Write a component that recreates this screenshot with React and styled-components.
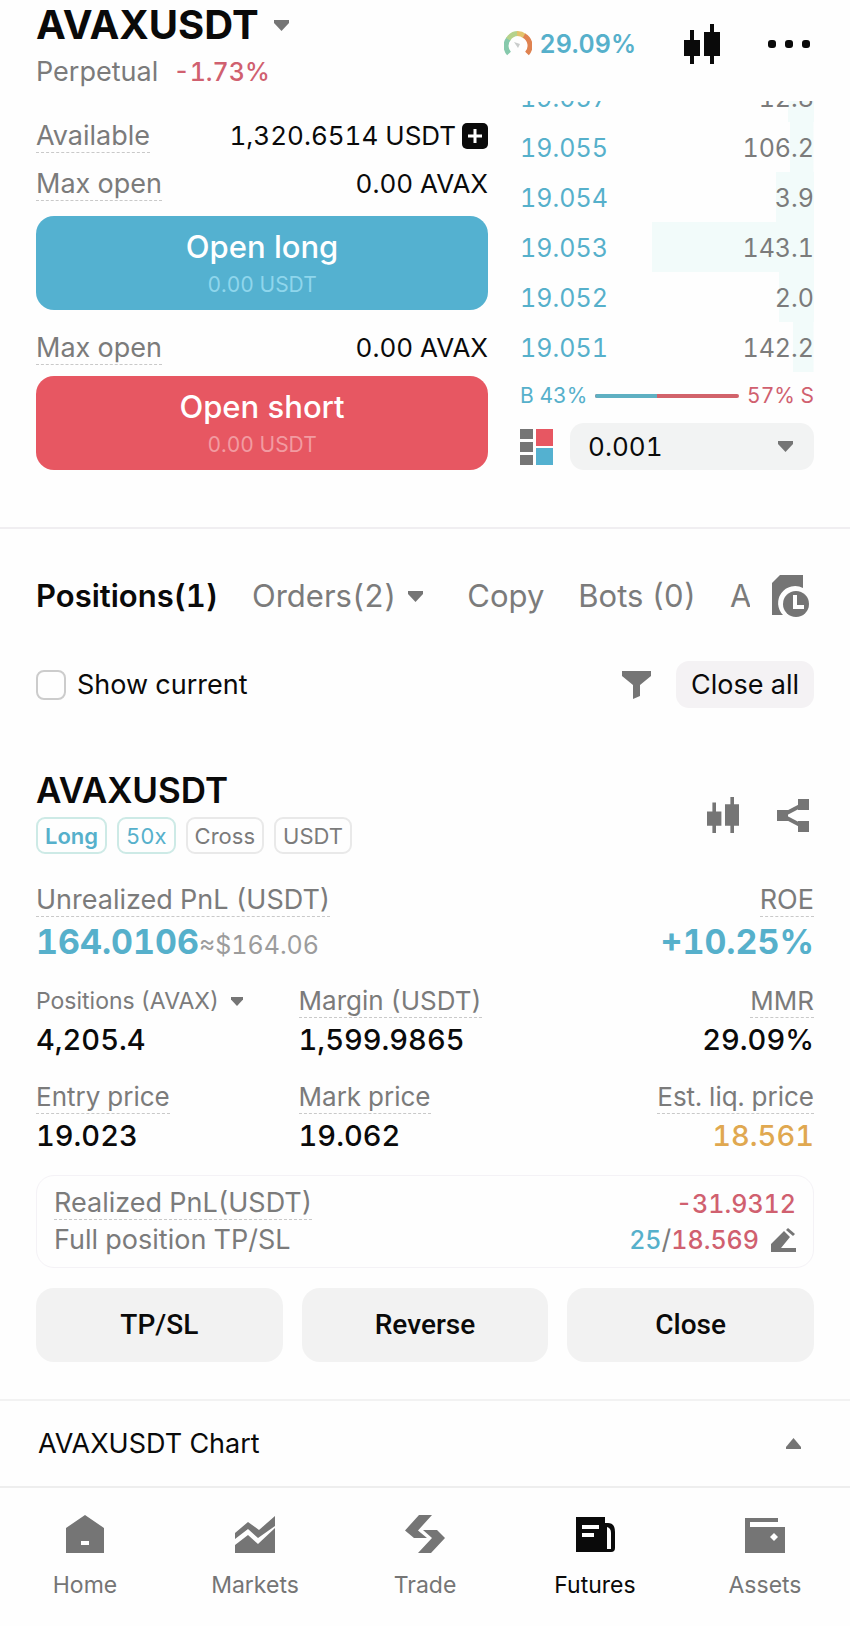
import { useState } from "react";
import styled, { createGlobalStyle } from "styled-components";

const bids = [
	{ price: "19.057", amount: "12.8", depth: 9 },
	{ price: "19.055", amount: "106.2", depth: 8 },
	{ price: "19.054", amount: "3.9", depth: 13 },
	{ price: "19.053", amount: "143.1", depth: 55 },
	{ price: "19.052", amount: "2.0", depth: 12 },
	{ price: "19.051", amount: "142.2", depth: 7 },
];

const stats = [
	{ label: "Positions (AVAX)", value: "4,205.4", menu: true },
	{ label: "Margin (USDT)", value: "1,599.9865" },
	{ label: "MMR", value: "29.09%" },
	{ label: "Entry price", value: "19.023" },
	{ label: "Mark price", value: "19.062" },
	{ label: "Est. liq. price", value: "18.561", warn: true },
];

const Caret = ({ up, small }) => (
	<svg width={small ? 12 : 15} height={small ? 9 : 11} viewBox="0 0 15 11" aria-hidden="true">
		<path d={up ? "M0 11V9L7.5 0 15 9v2z" : "M0 0h15v3L7.5 11 0 3z"} fill="#757575" />
	</svg>
);

const Candles = ({ size = 40, color = "#0a0a0a" }) => (
	<svg width={(size * 36) / 40} height={size} viewBox="0 0 36 40" fill={color} aria-hidden="true">
		<path d="M6 6h4v10h6v16h-6v8H6v-8H0V16h6z" />
		<path d="M26 0h4v8h6v24h-6v8h-4v-8h-6V8h6z" />
	</svg>
);

const Gauge = () => (
	<svg width="28" height="25" viewBox="0 0 28 25" fill="none" strokeWidth="5" aria-hidden="true">
		<path d="M5 22.5A11.5 11.5 0 0 1 4.5 7.7" stroke="#86c9ac" />
		<path d="M4.2 8.2A11.5 11.5 0 0 1 14 2.5" stroke="#b5d28b" />
		<path d="M13 2.5A11.5 11.5 0 0 1 20.5 5" stroke="#e3c36c" />
		<path d="M20 4.6A11.5 11.5 0 0 1 23 22.5" stroke="#df8250" />
		<path d="M10 11l6 2-2 4z" fill="#c9cccb" />
	</svg>
);

const navItems = [
	{
		label: "Home",
		icon: <path fillRule="evenodd" d="M20 0L39 13v25H1V13zM16 26v4h8v-4z" />,
	},
	{
		label: "Markets",
		icon: (
			<>
				<path d="M0 18L13 7l11 8L40 1v10L23 23 13 14 0 24z" />
				<path d="M0 30l13-10 10 9 17-16v25H0z" />
			</>
		),
	},
	{
		label: "Trade",
		icon: (
			<>
				<path d="M14 0h13L13 15.500 22 23H9L0 15.500z" />
				<path d="M18 15h14l8 8-14 15H13l14-15z" />
			</>
		),
	},
	{
		label: "Futures",
		active: true,
		icon: (
			<path
				fillRule="evenodd"
				d="M1 2h29v6h3q7 0 7 9v16q0 4-4 4H1zM7 10v4h17v-4zM7 18v4h12v-4zM32 12v22h4V18q0-5-4-6z"
			/>
		),
	},
	{
		label: "Assets",
		icon: <path fillRule="evenodd" d="M0 3h33v4H5v5h35v26H0zM29 18l-4 4 4 4 4-4z" />,
	},
];

const App = () => {
	const [step, setStep] = useState("0.001");
	const [onlyCurrent, setOnlyCurrent] = useState(false);

	return (
		<>
			<GlobalStyle />
			<Header>
				<div>
					<PairTitle>
						AVAXUSDT <Caret />
					</PairTitle>
					<PairInfo>
						Perpetual <Change>-1.73%</Change>
					</PairInfo>
				</div>
				<HeaderActions>
					<Risk>
						<Gauge />
						29.09%
					</Risk>
					<IconButton aria-label="Chart">
						<Candles />
					</IconButton>
					<IconButton aria-label="More">
						<svg width="42" height="8" viewBox="0 0 42 8" fill="#0a0a0a">
							<rect width="8" height="8" rx="3" />
							<rect x="17" width="8" height="8" rx="3" />
							<rect x="34" width="8" height="8" rx="3" />
						</svg>
					</IconButton>
				</HeaderActions>
			</Header>

			<TradePanel>
				<div>
					<Balances>
						<Row>
							<Hint>Available</Hint>
							<Amount>
								1,320.6514 USDT
								<IconButton aria-label="Add funds">
									<svg width="26" height="26" viewBox="0 0 26 26">
										<rect width="26" height="26" rx="5" fill="#0a0a0a" />
										<path d="M13 6v14M6 13h14" stroke="#fff" strokeWidth="3" />
									</svg>
								</IconButton>
							</Amount>
						</Row>
						<Row>
							<Hint>Max open</Hint>
							<Amount>0.00 AVAX</Amount>
						</Row>
					</Balances>
					<OrderButton>
						Open long
						<small>0.00 USDT</small>
					</OrderButton>
					<ShortSide>
						<Row>
							<Hint>Max open</Hint>
							<Amount>0.00 AVAX</Amount>
						</Row>
					</ShortSide>
					<OrderButton $short>
						Open short
						<small>0.00 USDT</small>
					</OrderButton>
				</div>

				<div>
					<BookWindow>
						<Book aria-label="Bids">
							<tbody>
								{bids.map(bid => (
									<BookRow key={bid.price} style={{ backgroundSize: `${bid.depth}% 100%` }}>
										<td>{bid.price}</td>
										<td>{bid.amount}</td>
									</BookRow>
								))}
							</tbody>
						</Book>
					</BookWindow>
					<Ratio>
						<span>B 43%</span>
						<RatioTrack>
							<RatioFill style={{ width: "43%" }} />
						</RatioTrack>
						<Sell>57% S</Sell>
					</Ratio>
					<BookTools>
						<IconButton aria-label="Order book layout">
							<svg width="33" height="36" viewBox="0 0 33 36">
								<path d="M0 0h13v10H0zM0 13h13v10H0zM0 26h13v10H0z" fill="#757575" />
								<path d="M16 0h17v17H16z" fill="#e75762" />
								<path d="M16 19h17v17H16z" fill="#54b1d0" />
							</svg>
						</IconButton>
						<StepBox>
							<select
								aria-label="Price step"
								value={step}
								onChange={e => setStep(e.target.value)}
							>
								<option>0.001</option>
								<option>0.01</option>
								<option>0.1</option>
							</select>
							<Caret />
						</StepBox>
					</BookTools>
				</div>
			</TradePanel>

			<Positions>
				<TabBar>
					<Tabs>
						<Tab $active>Positions(1)</Tab>
						<Tab $menu>
							Orders(2) <Caret />
						</Tab>
						<Tab>Copy</Tab>
						<Tab>Bots (0)</Tab>
						<Tab>A</Tab>
					</Tabs>
					<IconButton aria-label="History">
						<svg width="38" height="43" viewBox="0 0 38 43">
							<path d="M8 0h23v13A17 17 0 0 0 11 40H0V8z" fill="#757575" />
							<circle cx="24" cy="29" r="13" fill="#757575" />
							<path d="M23 20v12h9" fill="none" stroke="#fff" strokeWidth="4" />
						</svg>
					</IconButton>
				</TabBar>

				<FilterBar>
					<Check>
						<input
							type="checkbox"
							checked={onlyCurrent}
							onChange={e => setOnlyCurrent(e.target.checked)}
						/>
						Show current
					</Check>
					<FilterActions>
						<IconButton aria-label="Filter">
							<svg width="29" height="28" viewBox="0 0 29 28">
								<path d="M0 0h29v5l-11 9v11l-7 3V14L0 5z" fill="#757575" />
							</svg>
						</IconButton>
						<CloseAll>Close all</CloseAll>
					</FilterActions>
				</FilterBar>

				<PositionHead>
					<div>
						<PositionTitle>AVAXUSDT</PositionTitle>
						<Tags>
							<Tag $accent $bold>
								Long
							</Tag>
							<Tag $accent>50x</Tag>
							<Tag>Cross</Tag>
							<Tag>USDT</Tag>
						</Tags>
					</div>
					<PositionActions>
						<IconButton aria-label="Position chart">
							<Candles size={36} color="#757575" />
						</IconButton>
						<IconButton aria-label="Share">
							<svg width="32" height="33" viewBox="0 0 32 33">
								<path d="M27 5L5 16.500 27 28" fill="none" stroke="#757575" strokeWidth="4" />
								<path d="M21 0h11v11H21zM0 11h11v11H0zM21 22h11v11H21z" fill="#757575" />
							</svg>
						</IconButton>
					</PositionActions>
				</PositionHead>

				<Pnl>
					<div>
						<Hint>Unrealized PnL (USDT)</Hint>
						<PnlValue>
							164.0106<span>≈$164.06</span>
						</PnlValue>
					</div>
					<div>
						<Hint>ROE</Hint>
						<PnlValue>+10.25%</PnlValue>
					</div>
				</Pnl>

				<Stats>
					{stats.map(stat => (
						<Stat key={stat.label}>
							<dt>
								{stat.menu ? (
									<MenuLabel>
										{stat.label} <Caret small />
									</MenuLabel>
								) : (
									<Hint>{stat.label}</Hint>
								)}
							</dt>
							<StatValue $warn={stat.warn}>{stat.value}</StatValue>
						</Stat>
					))}
				</Stats>

				<Summary>
					<SummaryRow>
						<Hint>Realized PnL(USDT)</Hint>
						<Loss>-31.9312</Loss>
					</SummaryRow>
					<SummaryRow $tall>
						Full position TP/SL
						<Targets>
							<span>
								<Profit>25</Profit>/<Loss>18.569</Loss>
							</span>
							<IconButton aria-label="Edit TP/SL">
								<svg width="25" height="24" viewBox="0 0 25 24" fill="#757575">
									<path d="M0 16L13 3l6 6-9 11h15v4H0z" />
									<path d="M15 2l2-2 7 6-2 2z" />
								</svg>
							</IconButton>
						</Targets>
					</SummaryRow>
				</Summary>

				<Buttons>
					<ActionButton>TP/SL</ActionButton>
					<ActionButton>Reverse</ActionButton>
					<ActionButton>Close</ActionButton>
				</Buttons>
			</Positions>

			<ChartToggle>
				AVAXUSDT Chart <Caret up />
			</ChartToggle>

			<Nav>
				{navItems.map(item => (
					<NavLink key={item.label} href="#" $active={item.active}>
						<svg width="40" height="38" viewBox="0 0 40 38" fill="currentColor" aria-hidden="true">
							{item.icon}
						</svg>
						{item.label}
					</NavLink>
				))}
			</Nav>
		</>
	);
};

export default App;

const GlobalStyle = createGlobalStyle`
	* {
		box-sizing: border-box;
	}
	body {
		margin: 0;
		background: #fefefe;
		color: #0a0a0a;
		font-family: Inter, "Liberation Sans", sans-serif;
		font-size: 27px;
		line-height: 32px;
		font-variant-numeric: tabular-nums;
	}
	h1, h2, p, dl, dd {
		margin: 0;
	}
	button, select, input {
		font: inherit;
		font-variant-numeric: inherit;
		color: inherit;
		margin: 0;
	}
	button {
		border: none;
		padding: 0;
		background: none;
		cursor: pointer;
	}
	svg {
		display: block;
		flex-shrink: 0;
	}
`;

const IconButton = styled.button`
	display: flex;
	flex-shrink: 0;
`;

const Header = styled.header`
	display: flex;
	justify-content: space-between;
	height: 101px;
	padding: 0 40px 0 36px;
`;

const PairTitle = styled.h1`
	display: flex;
	align-items: center;
	gap: 15px;
	font-size: 40px;
	font-weight: 700;
	line-height: 50px;
`;

const PairInfo = styled.p`
	color: #7b7b7b;
	line-height: 44px;
`;

const Change = styled.span`
	margin-left: 8px;
	color: #d0606f;
	font-size: 25px;
	font-weight: 500;
`;

const HeaderActions = styled.div`
	display: flex;
	align-items: center;
	gap: 48px;
	height: 87px;
`;

const Risk = styled.span`
	display: flex;
	align-items: center;
	gap: 7px;
	color: #56b0cb;
	font-size: 25px;
	font-weight: 600;
`;

const TradePanel = styled.section`
	display: grid;
	grid-template-columns: 20fr 13fr;
	gap: 32px;
	padding: 0 36px 57px;
	border-bottom: 2px solid #f0eef1;
`;

const Balances = styled.div`
	padding: 11px 0 8px;
`;

const ShortSide = styled.div`
	padding: 14px 0 4px;
`;

const Row = styled.div`
	display: flex;
	align-items: center;
	justify-content: space-between;
	height: 48px;
`;

const Hint = styled.span`
	display: inline-block;
	vertical-align: top;
	color: #7b7b7b;
	border-bottom: 1px dashed #c9c9c9;
`;

const Amount = styled.span`
	display: flex;
	align-items: center;
	gap: 6px;
	font-size: 26px;
`;

const OrderButton = styled.button`
	display: flex;
	flex-direction: column;
	align-items: center;
	justify-content: center;
	width: 100%;
	height: 94px;
	padding-top: 4px;
	border-radius: 18px;
	background: ${({ $short }) => ($short ? "#e75762" : "#54b1d0")};
	color: #fff;
	font-size: 31px;
	font-weight: 500;
	line-height: 40px;
	small {
		color: ${({ $short }) => ($short ? "#f29ba1" : "#8fd6ec")};
		font-size: 21px;
		font-weight: 400;
		line-height: 36px;
	}
`;

const BookWindow = styled.div`
	display: flex;
	align-items: flex-end;
	height: 271px;
	overflow: hidden;
`;

const Book = styled.table`
	width: 100%;
	border-collapse: collapse;
	font-size: 25px;
	td {
		height: 50px;
		padding: 2px 0 0;
		color: #56b0cb;
	}
	td:last-child {
		color: #7b7b7b;
		text-align: right;
	}
`;

const BookRow = styled.tr`
	background: linear-gradient(#f2fbfa, #f2fbfa) no-repeat right;
`;

const Ratio = styled.div`
	display: flex;
	align-items: center;
	gap: 8px;
	height: 48px;
	margin-bottom: 3px;
	color: #56b0cb;
	font-size: 21px;
	white-space: nowrap;
`;

const Sell = styled.span`
	color: #d0606f;
`;

const RatioTrack = styled.div`
	flex: 1;
	height: 4px;
	border-radius: 2px;
	background: #d2636b;
	overflow: hidden;
`;

const RatioFill = styled.div`
	height: 100%;
	background: #5fb0c2;
`;

const BookTools = styled.div`
	display: flex;
	align-items: center;
	gap: 17px;
`;

const StepBox = styled.div`
	display: grid;
	flex: 1;
	align-items: center;
	font-size: 26px;
	select {
		grid-area: 1 / 1;
		height: 47px;
		padding: 0 18px;
		border: none;
		border-radius: 14px;
		background: #f2f3f3;
		appearance: none;
	}
	svg {
		grid-area: 1 / 1;
		justify-self: end;
		margin-right: 21px;
		pointer-events: none;
	}
`;

const Positions = styled.section`
	padding: 32px 36px 37px;
	border-bottom: 2px solid #f2f2f2;
`;

const TabBar = styled.div`
	display: flex;
	align-items: center;
	justify-content: space-between;
	gap: 22px;
	height: 70px;
	padding-right: 4px;
`;

const Tabs = styled.div`
	display: flex;
	flex: 1;
	gap: 34px;
	min-width: 0;
	overflow: hidden;
`;

const Tab = styled.button`
	display: flex;
	align-items: center;
	gap: 12px;
	padding-right: ${({ $menu }) => ($menu ? 10 : 0)}px;
	color: ${({ $active }) => ($active ? "#0a0a0a" : "#7b7b7b")};
	font-size: 31px;
	font-weight: ${({ $active }) => ($active ? 600 : 400)};
	line-height: 40px;
	white-space: nowrap;
`;

const FilterBar = styled.div`
	display: flex;
	align-items: center;
	justify-content: space-between;
	margin-top: 30px;
`;

const Check = styled.label`
	display: flex;
	align-items: center;
	gap: 11px;
	input {
		width: 30px;
		height: 30px;
		border: 2px solid #cccccc;
		border-radius: 8px;
		appearance: none;
	}
	input:checked {
		background: #54b1d0;
	}
`;

const FilterActions = styled.div`
	display: flex;
	align-items: center;
	gap: 25px;
`;

const CloseAll = styled.button`
	height: 47px;
	padding: 0 15px;
	border-radius: 13px;
	background: #f4f2f4;
`;

const PositionHead = styled.div`
	display: flex;
	align-items: center;
	justify-content: space-between;
	margin-top: 60px;
`;

const PositionTitle = styled.h2`
	font-size: 35px;
	font-weight: 600;
	line-height: 44px;
`;

const Tags = styled.div`
	display: flex;
	gap: 10px;
	margin-top: 5px;
`;

const Tag = styled.span`
	height: 37px;
	padding: 0 7px;
	border: 2px solid ${({ $accent }) => ($accent ? "#cdeae6" : "#e9e9e9")};
	border-radius: 9px;
	color: ${({ $accent }) => ($accent ? "#56b0cb" : "#7b7b7b")};
	font-size: 22px;
	font-weight: ${({ $bold }) => ($bold ? 600 : 400)};
	line-height: 34px;
`;

const PositionActions = styled.div`
	display: flex;
	align-items: center;
	gap: 38px;
	padding: 8px 5px 0 0;
`;

const Pnl = styled.div`
	display: flex;
	justify-content: space-between;
	margin-top: 30px;
	> div:last-child {
		text-align: right;
	}
`;

const PnlValue = styled.p`
	color: #56b0cb;
	font-size: 34px;
	font-weight: 700;
	line-height: 50px;
	span {
		color: #9c9c9c;
		font-size: 25px;
		font-weight: 400;
		line-height: 30px;
	}
`;

const Stats = styled.dl`
	display: grid;
	grid-template-columns: 27fr 26fr 27fr;
	row-gap: 19px;
	margin-top: 18px;
	font-size: 26px;
`;

const Stat = styled.div`
	dt {
		height: 33px;
	}
	&:nth-child(3n) {
		text-align: right;
	}
`;

const MenuLabel = styled.button`
	display: flex;
	align-items: center;
	gap: 12px;
	color: #7b7b7b;
	font-size: 23px;
`;

const StatValue = styled.dd`
	color: ${({ $warn }) => ($warn ? "#e0a850" : "#0a0a0a")};
	font-size: 29px;
	font-weight: 500;
	line-height: 44px;
`;

const Summary = styled.div`
	margin-top: 17px;
	padding: 11px 17px 7px;
	border: 1px solid #f4f2f6;
	border-radius: 18px;
`;

const SummaryRow = styled.div`
	display: flex;
	align-items: center;
	justify-content: space-between;
	height: ${({ $tall }) => ($tall ? 40 : 33)}px;
	color: #7b7b7b;
`;

const Loss = styled.span`
	color: #d0606f;
	font-size: 25px;
	font-weight: 500;
`;

const Profit = styled(Loss)`
	color: #56b0cb;
`;

const Targets = styled.span`
	display: flex;
	align-items: center;
	gap: 12px;
`;

const Buttons = styled.div`
	display: grid;
	grid-template-columns: repeat(3, 1fr);
	gap: 19px;
	margin-top: 20px;
`;

const ActionButton = styled.button`
	height: 74px;
	border-radius: 18px;
	background: #f2f2f2;
	font-family: Roboto, sans-serif;
	font-size: 28px;
	font-weight: 500;
`;

const ChartToggle = styled.button`
	display: flex;
	align-items: center;
	justify-content: space-between;
	width: 100%;
	height: 85px;
	padding: 0 49px 0 38px;
`;

const Nav = styled.nav`
	display: grid;
	grid-template-columns: repeat(5, 1fr);
	padding: 27px 0 24px;
	border-top: 2px solid #eeeeee;
`;

const NavLink = styled.a`
	display: flex;
	flex-direction: column;
	align-items: center;
	gap: 16px;
	color: ${({ $active }) => ($active ? "#0a0a0a" : "#757575")};
	font-size: 23px;
	text-decoration: none;
`;
